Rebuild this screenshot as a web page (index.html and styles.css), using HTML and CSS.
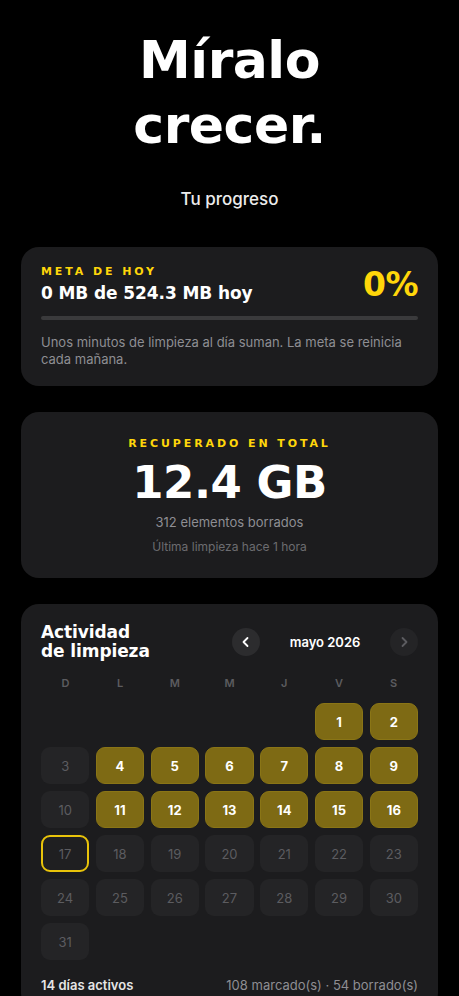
FILE: index.html
```html
<!DOCTYPE html>
<html lang="es">
<head>
    <meta charset="UTF-8">
    <meta name="viewport" content="width=device-width, initial-scale=1.0">
    <title>Míralo crecer</title>
    <link rel="stylesheet" href="styles.css">
</head>
<body>

<div class="page">
    <!-- Encabezado -->
    <header class="hero">
        <h1>Míralo<br>crecer.</h1>
        <p class="subtitle">Tu progreso</p>
    </header>

    <!-- Meta de hoy -->
    <section class="card goal">
        <div class="goal-head">
            <div>
                <div class="eyebrow">META DE HOY</div>
                <div class="goal-title">0 MB de 524.3 MB hoy</div>
            </div>
            <div class="goal-pct">0%</div>
        </div>
        <div class="bar"><div class="bar-fill" style="width: 0%"></div></div>
        <p class="note">Unos minutos de limpieza al día suman. La meta se reinicia cada mañana.</p>
    </section>

    <!-- Total recuperado -->
    <section class="card total">
        <div class="eyebrow">RECUPERADO EN TOTAL</div>
        <div class="total-value">12.4 GB</div>
        <div class="total-items">312 elementos borrados</div>
        <div class="total-last">Última limpieza hace 1 hora</div>
    </section>

    <!-- Calendario -->
    <section class="card activity">
        <div class="activity-head">
            <h2>Actividad<br>de limpieza</h2>
            <div class="month-nav">
                <button class="nav-btn" aria-label="Mes anterior">
                    <svg width="12" height="12" viewBox="0 0 12 12"><path d="M7.5 2 L3.5 6 L7.5 10" fill="none" stroke="#fff" stroke-width="1.8" stroke-linecap="round" stroke-linejoin="round"/></svg>
                </button>
                <span class="month-label">mayo 2026</span>
                <button class="nav-btn disabled" aria-label="Mes siguiente">
                    <svg width="12" height="12" viewBox="0 0 12 12"><path d="M4.5 2 L8.5 6 L4.5 10" fill="none" stroke="#5c5c60" stroke-width="1.8" stroke-linecap="round" stroke-linejoin="round"/></svg>
                </button>
            </div>
        </div>

        <div class="weekdays">
            <span>D</span><span>L</span><span>M</span><span>M</span><span>J</span><span>V</span><span>S</span>
        </div>

        <div class="days" id="days"></div>

        <div class="activity-foot">
            <span class="foot-strong">14 días activos</span>
            <span class="foot-muted">108 marcado(s) · 54 borrado(s)</span>
        </div>
    </section>
</div>

<script>
    // Mayo 2026 empieza en viernes
    const offset = 5;
    const activos = [1,2,4,5,6,7,8,9,11,12,13,14,15,16];
    const hoy = 17;
    let html = '';
    for (let i = 0; i < offset; i++) {
        html += '<div class="day empty"></div>';
    }
    for (let d = 1; d <= 31; d++) {
        let cls = 'day';
        if (activos.includes(d)) cls += ' active';
        if (d === hoy) cls += ' today';
        html += `<div class="${cls}">${d}</div>`;
    }
    document.getElementById('days').innerHTML = html;
</script>

</body>
</html>
```

FILE: styles.css
```css
/* Base */
body, html {
    margin: 0;
    padding: 0;
    background-color: #000;
    color: #fff;
    font-family: 'Inter', 'Noto Sans', sans-serif;
}

.page {
    padding: 0 21px 40px;
}

/* Encabezado */
.hero {
    text-align: center;
    padding-top: 28px;
}

.hero h1 {
    margin: 0;
    font-family: 'DejaVu Sans', sans-serif;
    font-weight: bold;
    font-size: 52px;
    line-height: 65px;
    letter-spacing: -0.5px;
}

.subtitle {
    margin: 30px 0 0;
    font-size: 17px;
    font-weight: 500;
    color: #ececec;
    line-height: 22px;
}

/* Tarjetas */
.card {
    background-color: #1c1c1e;
    border-radius: 18px;
    margin-top: 37px;
    padding: 18px 20px 18px;
}

.card + .card {
    margin-top: 26px;
}

.eyebrow {
    font-family: 'DejaVu Sans', sans-serif;
    font-weight: bold;
    font-size: 11px;
    letter-spacing: 2.9px;
    color: #ffd60a;
    line-height: 14px;
}

/* Meta de hoy */
.goal-head {
    display: flex;
    justify-content: space-between;
    align-items: center;
}

.goal-title {
    font-family: 'DejaVu Sans', sans-serif;
    font-weight: bold;
    font-size: 17px;
    margin-top: 4px;
    line-height: 21px;
    letter-spacing: -0.1px;
}

.goal-pct {
    font-family: 'DejaVu Sans', sans-serif;
    font-weight: bold;
    font-size: 33px;
    color: #ffd60a;
    letter-spacing: -0.5px;
}

.bar {
    height: 4px;
    border-radius: 2px;
    background-color: #3a3a3c;
    margin-top: 12px;
}

.bar-fill {
    height: 100%;
    border-radius: 2px;
    background-color: #ffd60a;
}

.note {
    margin: 14px 0 0;
    font-size: 13px;
    line-height: 17px;
    color: #8e8e93;
}

/* Total */
.total {
    text-align: center;
    padding-top: 25px;
    padding-bottom: 23px;
}

.total-value {
    font-family: 'DejaVu Sans', sans-serif;
    font-weight: bold;
    font-size: 45px;
    line-height: 52px;
    margin-top: 6px;
    letter-spacing: -0.5px;
}

.total-items {
    font-size: 13px;
    color: #8e8e93;
    margin-top: 5px;
    line-height: 17px;
}

.total-last {
    font-size: 12px;
    color: #6c6c70;
    margin-top: 8px;
    line-height: 16px;
}

/* Calendario */
.activity {
    padding-top: 19px;
}

.activity-head {
    display: flex;
    justify-content: space-between;
    align-items: center;
}

.activity-head h2 {
    margin: 0;
    font-family: 'DejaVu Sans', sans-serif;
    font-weight: bold;
    font-size: 17px;
    line-height: 19px;
    letter-spacing: -0.1px;
}

.month-nav {
    display: flex;
    align-items: center;
}

.nav-btn {
    width: 28px;
    height: 28px;
    border-radius: 50%;
    border: none;
    padding: 0;
    background-color: #2c2c2e;
    display: flex;
    align-items: center;
    justify-content: center;
}

.nav-btn.disabled {
    background-color: #242426;
}

.month-label {
    width: 130px;
    text-align: center;
    font-size: 13px;
    font-weight: 600;
}

.weekdays {
    display: grid;
    grid-template-columns: repeat(7, 1fr);
    gap: 6px;
    margin-top: 15px;
    text-align: center;
    font-size: 11px;
    font-weight: 600;
    color: #5c5c60;
}

.days {
    display: grid;
    grid-template-columns: repeat(7, 1fr);
    column-gap: 6.5px;
    row-gap: 7px;
    margin-top: 13px;
}

.day {
    height: 37px;
    border-radius: 9px;
    background-color: #242426;
    color: #5c5c60;
    font-size: 13px;
    display: flex;
    align-items: center;
    justify-content: center;
    box-sizing: border-box;
}

.day.empty {
    background: none;
}

.day.active {
    background-color: #7e6a14;
    border: 1px solid #8a7516;
    color: #fff;
    font-weight: bold;
}

.day.today {
    border: 2px solid #e8c30a;
    background-color: #1f1f21;
}

.activity-foot {
    display: flex;
    justify-content: space-between;
    margin-top: 17px;
    font-size: 13px;
}

.foot-strong {
    font-weight: 600;
    color: #e5e5e5;
}

.foot-muted {
    color: #8e8e93;
}
```
